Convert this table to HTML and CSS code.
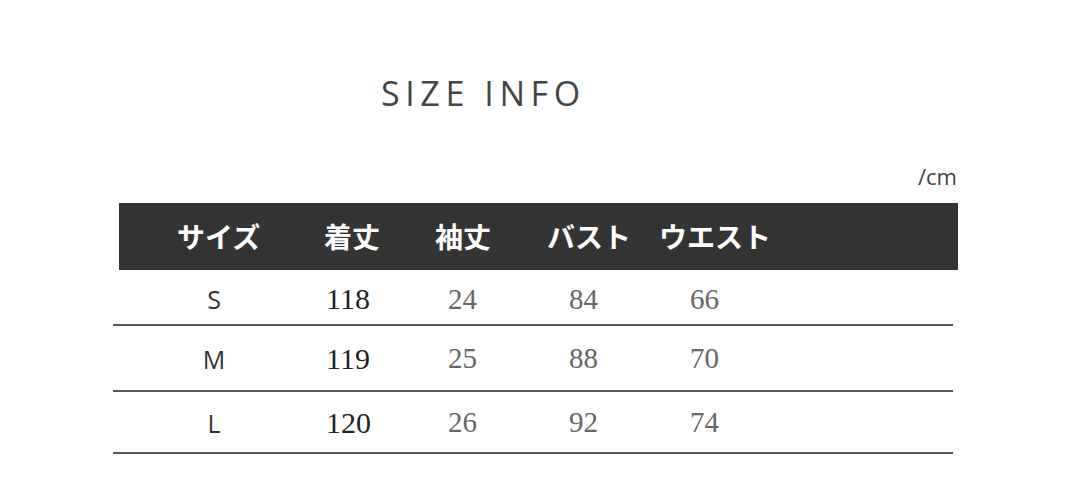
FILE: index.html
```html
<!DOCTYPE html>
<html lang="ja">
<head>
<meta charset="utf-8">
<link rel="stylesheet" href="styles.css">
</head>
<body>
<main class="page">
  <h1 class="title">SIZE INFO</h1>
  <div class="unit">/cm</div>
  <div class="head">
    <span>サイズ</span>
    <span>着丈</span>
    <span>袖丈</span>
    <span>バスト</span>
    <span>ウエスト</span>
  </div>
  <div class="rows">
    <div class="row r1">
      <span class="size">S</span><span class="num dark">118</span><span class="num">24</span><span class="num">84</span><span class="num">66</span>
    </div>
    <div class="row r2">
      <span class="size">M</span><span class="num dark">119</span><span class="num">25</span><span class="num">88</span><span class="num">70</span>
    </div>
    <div class="row r3">
      <span class="size">L</span><span class="num dark">120</span><span class="num">26</span><span class="num">92</span><span class="num">74</span>
    </div>
  </div>
</main>
</body>
</html>
```

FILE: styles.css
```css
html, body {
  margin: 0;
  padding: 0;
  background: #ffffff;
}
.page {
  width: 1080px;
  height: 503px;
  position: relative;
  font-family: "Open Sans", "Noto Sans CJK JP", sans-serif;
}
.title {
  margin: 0;
  padding: 73px 0 0 381px;
  font-family: "Open Sans", sans-serif;
  font-weight: 400;
  font-size: 34px;
  line-height: 40px;
  letter-spacing: 5.6px;
  color: #444;
}
.unit {
  margin: 50px 0 0 0;
  width: 957px;
  text-align: right;
  font-family: "Open Sans", sans-serif;
  font-size: 22px;
  line-height: 26px;
  color: #444;
}
.head {
  margin: 14px 0 0 119px;
  width: 781px;
  height: 67px;
  padding-left: 58px;
  background: #343434;
  display: grid;
  grid-template-columns: 147px 111px 112px 112px 1fr;
  align-items: center;
  font-family: "Noto Sans CJK JP", sans-serif;
  font-weight: 700;
  font-size: 28px;
  color: #ffffff;
  letter-spacing: 0;
}
.head span {
  line-height: 30px;
  padding-bottom: 2px;
}
.rows {
  margin-left: 113px;
  width: 840px;
}
.row {
  display: grid;
  grid-template-columns: 213px 122px 121px 121px 1fr;
  align-items: center;
  border-bottom: 2px solid #555;
}
.r1 { height: 50px; padding-top: 4px; }
.r2 { height: 63px; padding-top: 1px; }
.r3 { height: 59px; padding-top: 1px; }
.size {
  text-align: center;
  padding-right: 11px;
  font-family: "Open Sans", sans-serif;
  font-size: 25px;
  color: #333;
}
.num {
  font-family: "Liberation Serif", serif;
  font-size: 29px;
  color: #666;
}
.num.dark {
  font-size: 30px;
  color: #222;
}
```
